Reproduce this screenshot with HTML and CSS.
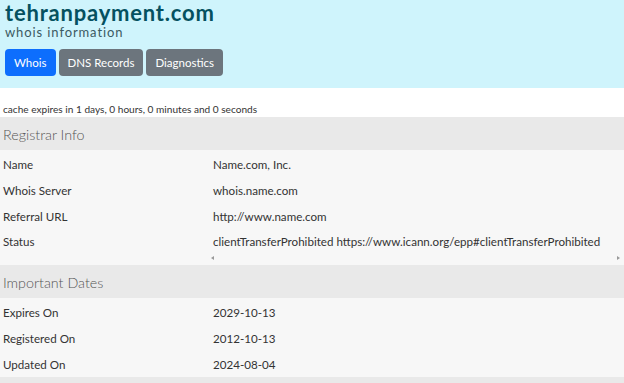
FILE: index.html
```html
<!DOCTYPE html>
<html lang="en">
<head>
<meta charset="UTF-8" />
<meta name="viewport" content="width=device-width, initial-scale=1" />
<title>tehranpayment.com - whois information</title>
<link rel="stylesheet" href="styles.css">
</head>
<body>
  <header class="hero">
    <h1>tehranpayment.com</h1>
    <p class="sub">whois information</p>
    <nav class="tabs" aria-label="Lookup type">
      <a class="btn btn-primary" href="#">Whois</a>
      <a class="btn btn-secondary" href="#">DNS Records</a>
      <a class="btn btn-secondary" href="#">Diagnostics</a>
    </nav>
  </header>

  <main>
    <p class="cache">cache expires in 1 days, 0 hours, 0 minutes and 0 seconds</p>

    <section class="panel">
      <h2>Registrar Info</h2>
      <div class="rows">
        <div class="row"><span class="key">Name</span><span class="val">Name.com, Inc.</span></div>
        <div class="row"><span class="key">Whois Server</span><span class="val">whois.name.com</span></div>
        <div class="row"><span class="key">Referral URL</span><span class="val">http://www.name.com</span></div>
        <div class="row row-scroll">
          <span class="key">Status</span>
          <div class="val">
            clientTransferProhibited https://www.icann.org/epp#clientTransferProhibited
            <div class="fake-scroll"><i class="arr-l"></i><i class="arr-r"></i></div>
          </div>
        </div>
      </div>
    </section>

    <section class="panel">
      <h2>Important Dates</h2>
      <div class="rows">
        <div class="row"><span class="key">Expires On</span><span class="val">2029-10-13</span></div>
        <div class="row"><span class="key">Registered On</span><span class="val">2012-10-13</span></div>
        <div class="row"><span class="key">Updated On</span><span class="val">2024-08-04</span></div>
      </div>
    </section>

    <section class="panel">
      <h2>&nbsp;</h2>
    </section>
  </main>
</body>
</html>
```

FILE: styles.css
```css
/* Temel */
*,
*::before,
*::after {
  box-sizing: border-box;
}

body {
  margin: 0;
  font-family: Lato, 'Open Sans', sans-serif;
  color: #222;
  background-color: #fff;
}

/* Üst alan */
.hero {
  background-color: #cff4fc;
  padding: 1px 5px 12px;
}

.hero h1 {
  margin: 0;
  font-size: 22px;
  font-weight: 700;
  line-height: 24px;
  letter-spacing: 0.8px;
  color: #055160;
}

.sub {
  margin: 0 0 10px;
  font-size: 13px;
  line-height: 14px;
  letter-spacing: 0.9px;
  color: #3b5a62;
}

.tabs {
  display: flex;
  gap: 3px;
}

.btn {
  display: inline-block;
  padding: 0 9px;
  height: 27px;
  line-height: 27px;
  font-size: 11.5px;
  color: #fff;
  text-decoration: none;
  border-radius: 4px;
}

.btn-primary {
  background-color: #0d6efd;
}

.btn-secondary {
  background-color: #6c757d;
}

/* Önbellek */
.cache {
  margin: 0;
  padding: 14px 3px 1px;
  font-size: 10.1px;
  line-height: 14px;
  color: #333;
}

/* Paneller */
.panel h2 {
  margin: 0;
  height: 33px;
  padding: 0 3px;
  font-size: 14.3px;
  font-weight: 300;
  line-height: 35px;
  color: #555;
  background-color: #e9e9e9;
}

.rows {
  background-color: #f7f7f7;
  padding-top: 1px;
}

.row {
  display: flex;
  height: 26px;
  align-items: center;
  font-size: 11.6px;
  color: #333;
}

.key {
  width: 213px;
  padding-left: 3px;
  flex-shrink: 0;
}

.val {
  white-space: nowrap;
}

.row-scroll {
  height: 36px;
  align-items: flex-start;
}

.row-scroll .key,
.row-scroll .val {
  line-height: 26px;
}

.row-scroll .val {
  flex: 1;
}

.fake-scroll {
  display: flex;
  justify-content: space-between;
  align-items: center;
  height: 6px;
  margin-left: -5px;
  padding: 0 4px 0 3px;
}

.arr-l,
.arr-r {
  width: 0;
  height: 0;
  border-top: 2px solid transparent;
  border-bottom: 2px solid transparent;
}

.arr-l {
  border-right: 3px solid #999;
}

.arr-r {
  border-left: 3px solid #999;
}
```
